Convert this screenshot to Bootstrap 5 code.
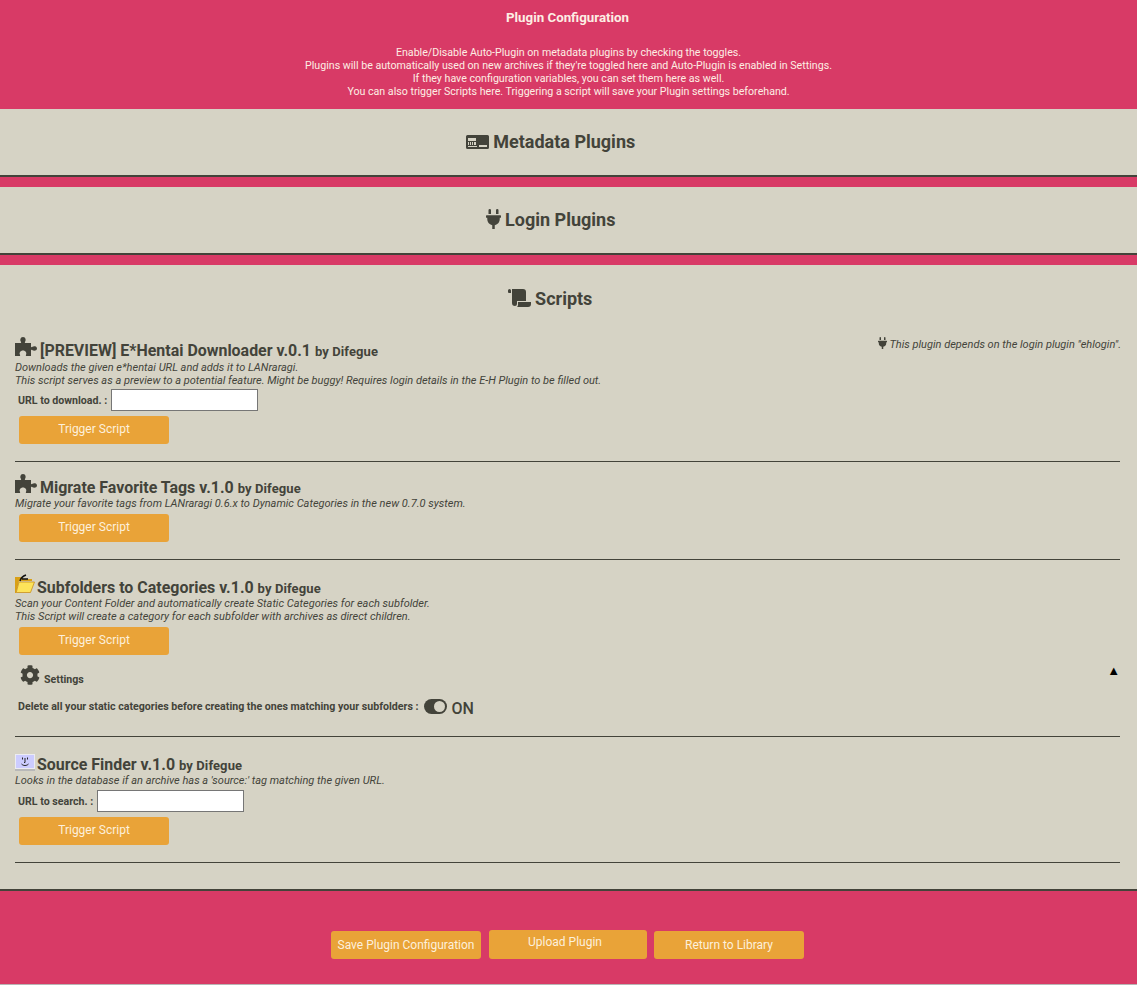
<!DOCTYPE html>
<html lang="en">
<head>
<meta charset="utf-8">
<title>Plugin Configuration</title>
<link rel="stylesheet" href="https://cdn.jsdelivr.net/npm/bootstrap@5.3.0/dist/css/bootstrap.min.css">
<style>
:root{--pink:#d83a66;--beige:#d6d3c5;--ink:#43433a;--amber:#e9a338;}
html,body{height:985px;overflow:hidden;}
body{background:var(--pink);color:var(--ink);font-family:Roboto,"Liberation Sans",sans-serif;font-size:11px;line-height:13px;}
.top-band{height:109px;color:#fdeee4;text-align:center;padding-top:11px;}
.top-title{font-size:13.3px;font-weight:700;line-height:14px;margin-bottom:21px;padding-right:2px;}
.top-text{line-height:13px;font-size:10.65px;}
.panel-box{background:var(--beige);border-bottom:2px solid var(--ink);margin-bottom:10px;}
.panel-short{height:68px;}
.panel-scripts{height:626px;margin-bottom:0;padding:0 17px 0 15px;}
.panel-head{font-size:18px;font-weight:700;line-height:22px;text-align:center;margin:0;padding:22px 36px 0 0;}
.panel-scripts .panel-head{padding-top:23px;padding-right:35px;margin-bottom:15px;}
.panel-head svg{fill:var(--ink);vertical-align:-1px;}
.panel-head .plug-lg{vertical-align:-3px;}
.panel-head .scroll-lg{vertical-align:-2px;}
.script-item{position:relative;border-bottom:1px solid var(--ink);padding-top:11px;padding-bottom:17px;}
.item-c{padding-top:14px;padding-bottom:22px;}
.item-d{padding-top:17px;}
.script-name{font-size:15.95px;font-weight:700;line-height:17px;margin:0;}
.script-name small{font-size:13px;font-weight:700;letter-spacing:.1px;}
.script-name svg{vertical-align:-1px;margin-right:3px;}
.script-name .pic{margin-right:2px;}
.script-desc{font-style:italic;line-height:13px;}
.desc-gap{margin-top:1px;}
.dep-note{position:absolute;right:-1px;top:12px;font-style:italic;font-size:11px;line-height:13px;}
.dep-note svg{fill:var(--ink);vertical-align:-1px;}
.field-row{display:flex;align-items:center;padding-left:3px;font-size:10.63px;font-weight:700;gap:4px;margin-top:3px;}
.item-a .field-row{margin-top:2px;}
.url-input{width:147px;height:22px;border:1px solid #767676;background:#fff;border-radius:0;padding:0;}
.act-btn{display:block;width:150px;height:28px;background:var(--amber);border:0;border-radius:3px;color:#fdf0dc;font-size:12px;line-height:28px;padding:0;text-align:center;font-family:inherit;}
.script-item .act-btn{margin-left:4px;margin-top:5px;line-height:26px;padding-bottom:2px;}
.desc-btn.act-btn{margin-top:4px !important;}
.set-row{display:flex;align-items:flex-end;padding-left:5px;font-size:10.63px;font-weight:700;gap:4px;line-height:12px;margin-top:10px;margin-bottom:14px;}
.set-row svg{fill:var(--ink);}
.set-label{margin-bottom:-1px;}
.set-row .caret-up{margin-left:auto;font-size:13px;color:#000;align-self:flex-start;}
.toggle-row{display:flex;align-items:center;padding-left:3px;font-size:10.63px;font-weight:700;height:15px;}
.toggle-track{display:inline-block;position:relative;width:23px;height:15px;background:var(--ink);border-radius:8px;margin-left:6px;}
.toggle-track::after{content:"";position:absolute;right:2px;top:2px;width:11px;height:11px;border-radius:50%;background:var(--beige);}
.toggle-state{font-size:16px;font-weight:500;margin-left:4px;margin-top:3px;}
.foot-band{display:flex;justify-content:center;align-items:flex-end;height:68px;gap:8px;padding-right:2px;}
.foot-band .act-btn{flex:none;}
.up-btn{width:158px;height:29px;line-height:24px;padding:0 6px 5px 0;margin-right:-1px;}
.page-end{height:1px;margin-top:25px;background:#b9b4b4;}
</style>
</head>
<body>
<div class="top-band">
  <div class="top-title">Plugin Configuration</div>
  <div class="top-text">Enable/Disable Auto-Plugin on metadata plugins by checking the toggles.<br>Plugins will be automatically used on new archives if they're toggled here and Auto-Plugin is enabled in Settings.<br>If they have configuration variables, you can set them here as well.<br>You can also trigger Scripts here. Triggering a script will save your Plugin settings beforehand.</div>
</div>

<section class="panel-box panel-short">
  <h2 class="panel-head"><svg width="23" height="14" viewBox="0 0 23 14"><path d="M1.5 0h20A1.5 1.5 0 0 1 23 1.500v11a1.500 1.500 0 0 1-1.500 1.500h-20A1.500 1.500 0 0 1 0 12.500v-11A1.500 1.500 0 0 1 1.500 0z"/><path fill="#d6d3c5" d="M2 3h8v3H2zM2 7h1v3H2zM4 7h1v3H4zM6 7h1v3H6zM8 7h2v3H8zM2 11h9v1H2zM13 10h8v2h-8z"/></svg> Metadata Plugins</h2>
</section>
<section class="panel-box panel-short">
  <h2 class="panel-head"><svg class="plug-lg" width="15" height="20" viewBox="0 0 384 512"><path d="M320,32a32,32,0,0,0-64,0v96h64Zm48,128H16A16,16,0,0,0,0,176v32a16,16,0,0,0,16,16H32v32A160.07,160.07,0,0,0,160,412.8V512h64V412.8A160.07,160.07,0,0,0,352,256V224h16a16,16,0,0,0,16-16V176A16,16,0,0,0,368,160ZM128,32a32,32,0,0,0-64,0v96h64Z"/></svg> Login Plugins</h2>
</section>

<section class="panel-box panel-scripts">
  <h2 class="panel-head"><svg class="scroll-lg" width="23" height="18" viewBox="0 0 23 18"><path d="M0 1.500A1.500 1.500 0 0 1 3 1.500V4H1a1 1 0 0 1-1-1zM4 0h11a3 3 0 0 1 3 3v9h-9v3a2 2 0 0 1-2 2 3 3 0 0 1-3-3zM10 13h13v2a3 3 0 0 1-3 3H9a3 3 0 0 0 1-2.500z"/></svg> Scripts</h2>

  <div class="script-item item-a">
    <div class="dep-note"><svg width="9" height="12" viewBox="0 0 384 512"><path d="M320,32a32,32,0,0,0-64,0v96h64Zm48,128H16A16,16,0,0,0,0,176v32a16,16,0,0,0,16,16H32v32A160.07,160.07,0,0,0,160,412.8V512h64V412.8A160.07,160.07,0,0,0,352,256V224h16a16,16,0,0,0,16-16V176A16,16,0,0,0,368,160ZM128,32a32,32,0,0,0-64,0v96h64Z"/></svg> This plugin depends on the login plugin "ehlogin".</div>
    <h3 class="script-name"><svg width="22" height="21" viewBox="0 0 22 21" fill="#43433a"><use href="#puzzle"/></svg>[PREVIEW] E*Hentai Downloader v.0.1 <small>by Difegue</small></h3>
    <div class="script-desc desc-gap">Downloads the given e*hentai URL and adds it to LANraragi.<br>This script serves as a preview to a potential feature. Might be buggy! Requires login details in the E-H Plugin to be filled out.</div>
    <div class="field-row"><span>URL to download. :</span><input class="url-input" type="text"></div>
    <button class="act-btn" type="button">Trigger Script</button>
  </div>

  <div class="script-item item-b">
    <h3 class="script-name"><svg width="22" height="21" viewBox="0 0 22 21" fill="#43433a"><use href="#puzzle"/></svg>Migrate Favorite Tags v.1.0 <small>by Difegue</small></h3>
    <div class="script-desc">Migrate your favorite tags from LANraragi 0.6.x to Dynamic Categories in the new 0.7.0 system.</div>
    <button class="act-btn desc-btn" type="button">Trigger Script</button>
  </div>

  <div class="script-item item-c">
    <h3 class="script-name"><svg class="pic" width="20" height="20" viewBox="0 0 20 20"><path fill="#d9a016" d="M0 3h7l1 2h9v2H4L1 19H0z"/><path fill="#fde35a" stroke="#c98f1d" stroke-width=".8" d="M4 8h15.500L15.500 18.500H1.200z"/><path fill="none" stroke="#111" stroke-width="1.400" d="M5 7C6 3 8 2 11 1M7 5h6"/></svg>Subfolders to Categories v.1.0 <small>by Difegue</small></h3>
    <div class="script-desc">Scan your Content Folder and automatically create Static Categories for each subfolder.<br>This Script will create a category for each subfolder with archives as direct children.</div>
    <button class="act-btn desc-btn" type="button">Trigger Script</button>
    <div class="set-row"><svg width="20" height="20" viewBox="0 0 512 512"><path d="M487.4 315.700l-42.600-24.600c4.300-23.200 4.300-47 0-70.200l42.600-24.600c4.900-2.800 7.100-8.600 5.500-14-11.100-35.600-30-67.800-54.700-94.600-3.800-4.100-10-5.100-14.800-2.300L380.800 110c-17.900-15.400-38.500-27.300-60.800-35.100V25.800c0-5.600-3.900-10.500-9.400-11.700-36.700-8.200-74.300-7.800-109.200 0-5.500 1.200-9.400 6.100-9.400 11.700V75c-22.200 7.900-42.800 19.800-60.800 35.100L88.700 85.500c-4.900-2.800-11-1.900-14.800 2.300-24.700 26.700-43.600 58.900-54.700 94.600-1.700 5.400.6 11.200 5.500 14L67.300 221c-4.300 23.200-4.300 47 0 70.200l-42.600 24.600c-4.900 2.800-7.100 8.600-5.500 14 11.100 35.600 30 67.800 54.700 94.600 3.800 4.100 10 5.100 14.800 2.300l42.600-24.600c17.900 15.400 38.500 27.300 60.800 35.100v49.200c0 5.600 3.900 10.500 9.400 11.700 36.700 8.200 74.300 7.800 109.200 0 5.500-1.200 9.400-6.100 9.400-11.700v-49.200c22.200-7.900 42.800-19.800 60.800-35.100l42.600 24.600c4.900 2.800 11 1.900 14.800-2.300 24.700-26.700 43.600-58.900 54.700-94.600 1.500-5.500-.7-11.300-5.600-14.100zM256 336c-44.100 0-80-35.900-80-80s35.900-80 80-80 80 35.900 80 80-35.900 80-80 80z"/></svg><span class="set-label">Settings</span><span class="caret-up">▲</span></div>
    <div class="toggle-row"><span>Delete all your static categories before creating the ones matching your subfolders :</span><span class="toggle-track"></span><span class="toggle-state">ON</span></div>
  </div>

  <div class="script-item item-d">
    <h3 class="script-name"><svg class="pic" width="20" height="17" viewBox="0 0 20 17"><rect width="20" height="17" fill="#b8b8b8"/><rect width="20" height="15" fill="#ecECF2"/><rect x="1" y="1" width="18" height="13" fill="#ccccff"/><path fill="none" stroke="#222" d="M7.500 3.500v2M12.500 3.500v2M10 4v4.500H9M6.500 10c2 2 5 2 7 0"/></svg>Source Finder v.1.0 <small>by Difegue</small></h3>
    <div class="script-desc">Looks in the database if an archive has a 'source:' tag matching the given URL.</div>
    <div class="field-row"><span>URL to search. :</span><input class="url-input" type="text"></div>
    <button class="act-btn" type="button">Trigger Script</button>
  </div>
</section>

<div class="foot-band">
  <button class="act-btn" type="button">Save Plugin Configuration</button>
  <button class="act-btn up-btn" type="button">Upload Plugin</button>
  <button class="act-btn" type="button">Return to Library</button>
</div>
<div class="page-end"></div>

<svg width="0" height="0" class="position-absolute"><defs><g id="puzzle"><path d="M0 7h5.500C6 7 6.500 6.500 5.800 5.500 5 4.500 5 1 8 1s3 3.500 2.200 4.500C9.500 6.500 10 7 10.500 7H16v3.500c0 .5.500 1 1.500.3 1-.8 4.500-.8 4.500 1.700s-3.500 2.500-4.500 1.700c-1-.7-1.500-.2-1.500.3V20h-4.500c-.5 0-1-.5-.4-1.500.8-1.500-.5-4-3.100-4s-3.900 2.500-3.100 4c.6 1 .1 1.500-.4 1.500H0z"/></g></defs></svg>
</body>
</html>
